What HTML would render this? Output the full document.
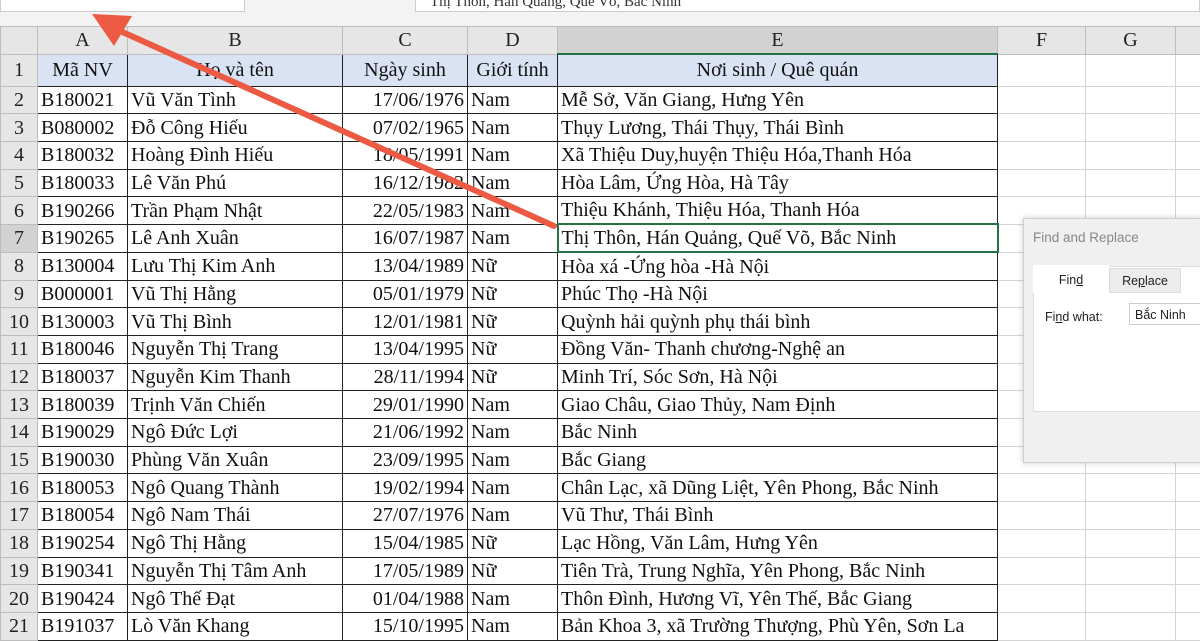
<!DOCTYPE html><html><head><meta charset="utf-8"><style>
*{margin:0;padding:0;box-sizing:border-box}
body{width:1200px;height:630px;overflow:hidden;background:#fff;position:relative;font-family:"Liberation Serif",serif;font-size:20px;color:#111}
.top{position:absolute;left:0;top:0;width:1200px;height:26px;background:#f3f3f3}
.nb{position:absolute;left:0;top:0;width:245px;height:12px;background:#fff;border:1px solid #ccc;border-top:0}
.fb{position:absolute;left:415px;top:0;width:785px;height:12px;background:#fff;border:1px solid #ccc;border-top:0;font-size:15px;line-height:4px;padding-left:14px;color:#333;overflow:hidden}
table{position:absolute;left:0;top:26px;border-collapse:collapse;table-layout:fixed;width:1225px}
td{padding:0 3px;white-space:nowrap;overflow:hidden;height:27.7px;line-height:26px;border:1px solid #d4d4d4}
tr.h td{height:25px;background:#e6e6e6;text-align:center;border-color:#bdbdbd;color:#222}
tr.r1 td{height:32px}
td.rh{background:#e6e6e6;text-align:center;padding:0;border-color:#bdbdbd;color:#222}
td.d{border:1px solid #222}
tr.r1 td.d{background:#dae3f3;text-align:center}
td.c{text-align:right}
.sel{background:#d2d2d2!important;border-bottom:2px solid #217346!important}
.dlg{position:absolute;left:1023px;top:218px;width:180px;height:245px;background:#f0f0f0;border:1px solid #d0d0d0;box-shadow:0 0 6px rgba(0,0,0,.2);font-family:"Liberation Sans",sans-serif;font-size:12.5px;color:#222}
</style></head><body>
<div class="top"><div class="nb"></div><div class="fb">Thị Thôn, Hán Quảng, Quế Võ, Bắc Ninh</div></div>
<table>
<colgroup><col style="width:37px"><col style="width:90px"><col style="width:215px"><col style="width:125px"><col style="width:90px"><col style="width:440px"><col style="width:88px"><col style="width:90px"><col style="width:50px"></colgroup>
<tr class="h"><td></td><td>A</td><td>B</td><td>C</td><td>D</td><td class="sel">E</td><td>F</td><td>G</td><td></td></tr>
<tr class="r1"><td class="rh">1</td><td class="d">Mã NV</td><td class="d">Họ và tên</td><td class="d">Ngày sinh</td><td class="d">Giới tính</td><td class="d">Nơi sinh / Quê quán</td><td></td><td></td><td></td></tr>
<tr><td class="rh">2</td><td class="d">B180021</td><td class="d">Vũ Văn Tình</td><td class="d c">17/06/1976</td><td class="d">Nam</td><td class="d">Mễ Sở, Văn Giang, Hưng Yên</td><td></td><td></td><td></td></tr>
<tr><td class="rh">3</td><td class="d">B080002</td><td class="d">Đỗ Công Hiếu</td><td class="d c">07/02/1965</td><td class="d">Nam</td><td class="d">Thụy Lương, Thái Thụy, Thái Bình</td><td></td><td></td><td></td></tr>
<tr><td class="rh">4</td><td class="d">B180032</td><td class="d">Hoàng Đình Hiếu</td><td class="d c">18/05/1991</td><td class="d">Nam</td><td class="d">Xã Thiệu Duy,huyện Thiệu Hóa,Thanh Hóa</td><td></td><td></td><td></td></tr>
<tr><td class="rh">5</td><td class="d">B180033</td><td class="d">Lê Văn Phú</td><td class="d c">16/12/1982</td><td class="d">Nam</td><td class="d">Hòa Lâm, Ứng Hòa, Hà Tây</td><td></td><td></td><td></td></tr>
<tr><td class="rh">6</td><td class="d">B190266</td><td class="d">Trần Phạm Nhật</td><td class="d c">22/05/1983</td><td class="d">Nam</td><td class="d">Thiệu Khánh, Thiệu Hóa, Thanh Hóa</td><td></td><td></td><td></td></tr>
<tr><td class="rh" style="background:#d2d2d2">7</td><td class="d">B190265</td><td class="d">Lê Anh Xuân</td><td class="d c">16/07/1987</td><td class="d">Nam</td><td class="d" style="border:2px solid #217346">Thị Thôn, Hán Quảng, Quế Võ, Bắc Ninh</td><td></td><td></td><td></td></tr>
<tr><td class="rh">8</td><td class="d">B130004</td><td class="d">Lưu Thị Kim Anh</td><td class="d c">13/04/1989</td><td class="d">Nữ</td><td class="d">Hòa xá -Ứng hòa -Hà Nội</td><td></td><td></td><td></td></tr>
<tr><td class="rh">9</td><td class="d">B000001</td><td class="d">Vũ Thị Hằng</td><td class="d c">05/01/1979</td><td class="d">Nữ</td><td class="d">Phúc Thọ -Hà Nội</td><td></td><td></td><td></td></tr>
<tr><td class="rh">10</td><td class="d">B130003</td><td class="d">Vũ Thị Bình</td><td class="d c">12/01/1981</td><td class="d">Nữ</td><td class="d">Quỳnh hải quỳnh phụ thái bình</td><td></td><td></td><td></td></tr>
<tr><td class="rh">11</td><td class="d">B180046</td><td class="d">Nguyễn Thị Trang</td><td class="d c">13/04/1995</td><td class="d">Nữ</td><td class="d">Đồng Văn- Thanh chương-Nghệ an</td><td></td><td></td><td></td></tr>
<tr><td class="rh">12</td><td class="d">B180037</td><td class="d">Nguyễn Kim Thanh</td><td class="d c">28/11/1994</td><td class="d">Nữ</td><td class="d">Minh Trí, Sóc Sơn, Hà Nội</td><td></td><td></td><td></td></tr>
<tr><td class="rh">13</td><td class="d">B180039</td><td class="d">Trịnh Văn Chiến</td><td class="d c">29/01/1990</td><td class="d">Nam</td><td class="d">Giao Châu, Giao Thủy, Nam Định</td><td></td><td></td><td></td></tr>
<tr><td class="rh">14</td><td class="d">B190029</td><td class="d">Ngô Đức Lợi</td><td class="d c">21/06/1992</td><td class="d">Nam</td><td class="d">Bắc Ninh</td><td></td><td></td><td></td></tr>
<tr><td class="rh">15</td><td class="d">B190030</td><td class="d">Phùng Văn Xuân</td><td class="d c">23/09/1995</td><td class="d">Nam</td><td class="d">Bắc Giang</td><td></td><td></td><td></td></tr>
<tr><td class="rh">16</td><td class="d">B180053</td><td class="d">Ngô Quang Thành</td><td class="d c">19/02/1994</td><td class="d">Nam</td><td class="d">Chân Lạc, xã Dũng Liệt, Yên Phong, Bắc Ninh</td><td></td><td></td><td></td></tr>
<tr><td class="rh">17</td><td class="d">B180054</td><td class="d">Ngô Nam Thái</td><td class="d c">27/07/1976</td><td class="d">Nam</td><td class="d">Vũ Thư, Thái Bình</td><td></td><td></td><td></td></tr>
<tr><td class="rh">18</td><td class="d">B190254</td><td class="d">Ngô Thị Hằng</td><td class="d c">15/04/1985</td><td class="d">Nữ</td><td class="d">Lạc Hồng, Văn Lâm, Hưng Yên</td><td></td><td></td><td></td></tr>
<tr><td class="rh">19</td><td class="d">B190341</td><td class="d">Nguyễn Thị Tâm Anh</td><td class="d c">17/05/1989</td><td class="d">Nữ</td><td class="d">Tiên Trà, Trung Nghĩa, Yên Phong, Bắc Ninh</td><td></td><td></td><td></td></tr>
<tr><td class="rh">20</td><td class="d">B190424</td><td class="d">Ngô Thế Đạt</td><td class="d c">01/04/1988</td><td class="d">Nam</td><td class="d">Thôn Đình, Hương Vĩ, Yên Thế, Bắc Giang</td><td></td><td></td><td></td></tr>
<tr><td class="rh">21</td><td class="d">B191037</td><td class="d">Lò Văn Khang</td><td class="d c">15/10/1995</td><td class="d">Nam</td><td class="d">Bản Khoa 3, xã Trường Thượng, Phù Yên, Sơn La</td><td></td><td></td><td></td></tr>
</table>
<div class="dlg">
<div style="position:absolute;left:9px;top:11px;font-size:13.5px;color:#888">Find and Replace</div>
<div style="position:absolute;left:9px;top:47px;width:175px;height:146px;background:#fff;border:1px solid #ddd"></div>
<div style="position:absolute;left:9px;top:46px;width:76px;height:28px;background:#fff;text-align:center;line-height:30px">Fin<u>d</u></div>
<div style="position:absolute;left:85px;top:49px;width:72px;height:25px;background:#ececec;border:1px solid #ddd;text-align:center;line-height:24px">Re<u>p</u>lace</div>
<div style="position:absolute;left:21px;top:91px">Fi<u>n</u>d what:</div>
<div style="position:absolute;left:105px;top:84px;width:80px;height:22px;background:#fff;border:1px solid #ccc;padding:4px 5px">Bắc Ninh</div>
</div>
<svg style="position:absolute;left:0;top:0" width="1200" height="630"><line x1="554" y1="226" x2="118" y2="30" stroke="#ec5a44" stroke-width="6" stroke-linecap="round"/><polygon points="92,14 132,16 114,46" fill="#ec5a44"/></svg>
</body></html>
